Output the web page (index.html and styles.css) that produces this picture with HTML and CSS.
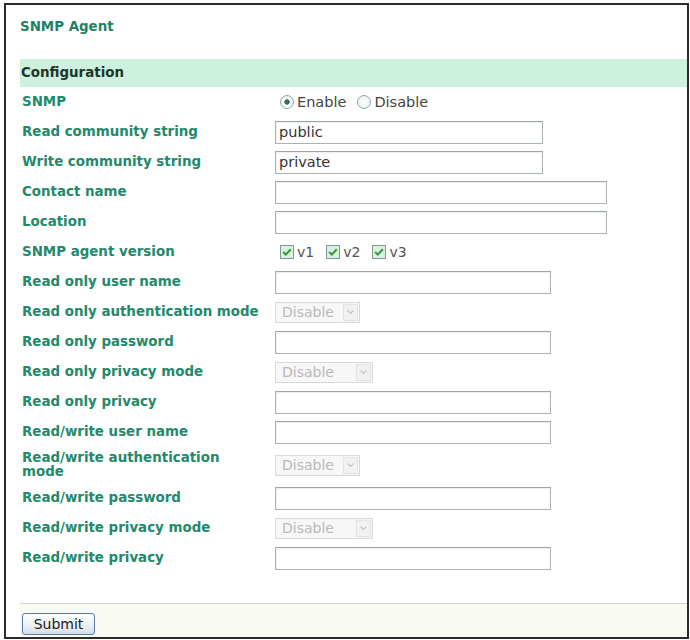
FILE: index.html
```html
<!DOCTYPE html>
<html>

<head>
  <meta charset="utf-8">
  <title>SNMP Agent</title>
  <link rel="stylesheet" href="styles.css">
</head>

<body>
  <div class="frame">
    <h2 class="title">SNMP Agent</h2>
    <form class="config">
      <div class="bar">Configuration</div>
      <div class="rows">
        <div class="lbl">SNMP</div>
        <div class="fld">
          <label class="opt"><input type="radio" name="snmp" checked>Enable</label>
          <label class="opt"><input type="radio" name="snmp">Disable</label>
        </div>

        <div class="lbl">Read community string</div>
        <div class="fld"><input class="txt short" type="text" value="public"></div>

        <div class="lbl">Write community string</div>
        <div class="fld"><input class="txt short" type="text" value="private"></div>

        <div class="lbl">Contact name</div>
        <div class="fld"><input class="txt wide" type="text"></div>

        <div class="lbl">Location</div>
        <div class="fld"><input class="txt wide" type="text"></div>

        <div class="lbl">SNMP agent version</div>
        <div class="fld">
          <label class="ck"><svg width="14" height="14" viewBox="0 0 14 14"><rect x="0.5" y="0.5" width="13" height="13" fill="#dcf1dc" stroke="#7d9a94"/><polyline points="3.2,7 5.8,9.6 10.8,4.2" fill="none" stroke="#2e9a3e" stroke-width="2"/></svg>v1</label>
          <label class="ck"><svg width="14" height="14" viewBox="0 0 14 14"><rect x="0.5" y="0.5" width="13" height="13" fill="#dcf1dc" stroke="#7d9a94"/><polyline points="3.2,7 5.8,9.6 10.8,4.2" fill="none" stroke="#2e9a3e" stroke-width="2"/></svg>v2</label>
          <label class="ck"><svg width="14" height="14" viewBox="0 0 14 14"><rect x="0.5" y="0.5" width="13" height="13" fill="#dcf1dc" stroke="#7d9a94"/><polyline points="3.2,7 5.8,9.6 10.8,4.2" fill="none" stroke="#2e9a3e" stroke-width="2"/></svg>v3</label>
        </div>

        <div class="lbl">Read only user name</div>
        <div class="fld"><input class="txt mid" type="text"></div>

        <div class="lbl">Read only authentication mode</div>
        <div class="fld">
          <span class="sel auth"><select disabled><option>Disable</option></select><span class="arrow"><svg width="7" height="5" viewBox="0 0 7 5"><polyline points="0.5,0.5 3.5,3.5 6.5,0.5" fill="none" stroke="#c4c4c4" stroke-width="1.2"/></svg></span></span>
        </div>

        <div class="lbl">Read only password</div>
        <div class="fld"><input class="txt mid" type="password"></div>

        <div class="lbl">Read only privacy mode</div>
        <div class="fld">
          <span class="sel priv"><select disabled><option>Disable</option></select><span class="arrow"><svg width="7" height="5" viewBox="0 0 7 5"><polyline points="0.5,0.5 3.5,3.5 6.5,0.5" fill="none" stroke="#c4c4c4" stroke-width="1.2"/></svg></span></span>
        </div>

        <div class="lbl">Read only privacy</div>
        <div class="fld"><input class="txt mid" type="password"></div>

        <div class="lbl">Read/write user name</div>
        <div class="fld"><input class="txt mid" type="text"></div>

        <div class="lbl tall">Read/write authentication<br>mode</div>
        <div class="fld tall">
          <span class="sel auth"><select disabled><option>Disable</option></select><span class="arrow"><svg width="7" height="5" viewBox="0 0 7 5"><polyline points="0.5,0.5 3.5,3.5 6.5,0.5" fill="none" stroke="#c4c4c4" stroke-width="1.2"/></svg></span></span>
        </div>

        <div class="lbl">Read/write password</div>
        <div class="fld"><input class="txt mid" type="password"></div>

        <div class="lbl">Read/write privacy mode</div>
        <div class="fld">
          <span class="sel priv"><select disabled><option>Disable</option></select><span class="arrow"><svg width="7" height="5" viewBox="0 0 7 5"><polyline points="0.5,0.5 3.5,3.5 6.5,0.5" fill="none" stroke="#c4c4c4" stroke-width="1.2"/></svg></span></span>
        </div>

        <div class="lbl">Read/write privacy</div>
        <div class="fld"><input class="txt mid" type="password"></div>
      </div>
      <div class="foot">
        <button type="button" class="submit">Submit</button>
      </div>
    </form>
  </div>
</body>

</html>
```

FILE: styles.css
```css
html,
body {
  margin: 0;
  background: #fff;
}

body {
  font-family: "DejaVu Sans", Verdana, sans-serif;
}

.frame {
  box-sizing: border-box;
  width: 685px;
  height: 636px;
  margin: 3px 0 0 4px;
  border: 2px solid #2b2b2b;
  padding-left: 14px;
  display: flex;
  flex-direction: column;
}

.title {
  margin: 14px 0 0;
  font-size: 13.4px;
  line-height: 16px;
  font-weight: bold;
  color: #1f8165;
}

.config {
  margin: 24px 0 0;
  flex: 1;
  display: flex;
  flex-direction: column;
}

.bar {
  height: 28px;
  line-height: 28px;
  padding-left: 1px;
  background: #cdf1de;
  color: #1d352b;
  font-size: 13.4px;
  font-weight: bold;
}

.rows {
  display: grid;
  grid-template-columns: 255px 1fr;
  grid-auto-rows: minmax(30px, auto);
}

.lbl {
  display: flex;
  align-items: center;
  padding-left: 2px;
  font-size: 13.4px;
  line-height: 14px;
  font-weight: bold;
  color: #22896b;
}

.fld {
  display: flex;
  align-items: center;
  font-size: 14.5px;
  color: #444;
}

.tall {
  height: 36px;
}

.opt {
  display: flex;
  align-items: center;
  margin-left: 5px;
  margin-right: 6px;
}

.opt input {
  appearance: none;
  box-sizing: border-box;
  width: 14px;
  height: 14px;
  margin: 0 3px 0 0;
  border: 1px solid #8ea6aa;
  border-radius: 50%;
  background: radial-gradient(circle, #fff 0, #e4ecec 100%);
}

.opt input:checked {
  background: radial-gradient(circle, #3f6a5d 0 2.4px, #fff 3px, #e4ecec 100%);
}

.ck {
  display: flex;
  align-items: center;
  margin-left: 5px;
  margin-right: 12px;
  font-size: 14px;
  color: #555;
}

.ck svg {
  margin-right: 3px;
}

.ck + .ck {
  margin-left: 0;
}

.txt {
  box-sizing: border-box;
  height: 23px;
  margin: 0;
  padding: 0 3px;
  border: 1px solid #a9b3b3;
  border-top-color: #9aa3a3;
  box-shadow: inset 1px 1px 0 #eef0f0;
  font-family: "DejaVu Sans", Verdana, sans-serif;
  font-size: 14.5px;
  color: #333;
  background: #fff;
}

.short {
  width: 268px;
}

.mid {
  width: 276px;
}

.wide {
  width: 332px;
}

.sel {
  position: relative;
  display: inline-block;
}

.sel select {
  appearance: none;
  box-sizing: border-box;
  height: 21px;
  margin: 0;
  padding: 0 0 0 6px;
  border: 1px solid #d9d9d9;
  background: #f7f7f7;
  color: #b9b9b9;
  font-family: "DejaVu Sans", Verdana, sans-serif;
  font-size: 14px;
  opacity: 1;
}

.auth select {
  width: 85px;
}

.priv select {
  width: 98px;
}

.arrow {
  position: absolute;
  top: 2px;
  right: 2px;
  box-sizing: border-box;
  width: 15px;
  height: 17px;
  border: 1px solid #e4e4e4;
  background: #f1f1f1;
  display: flex;
  align-items: center;
  justify-content: center;
}

.foot {
  margin-top: 30px;
  flex: 1;
  border-top: 1px solid #d2d2d2;
  background: #fafaf4;
  padding: 9px 0 0 2px;
}

.submit {
  box-sizing: border-box;
  width: 73px;
  height: 22px;
  margin: 0;
  padding: 0;
  border: 1px solid #5679a8;
  border-radius: 3px;
  background: linear-gradient(#ffffff, #e6ecf2 70%, #d3dde8);
  font-family: "DejaVu Sans", Verdana, sans-serif;
  font-size: 14px;
  color: #1a1a1a;
}
```
